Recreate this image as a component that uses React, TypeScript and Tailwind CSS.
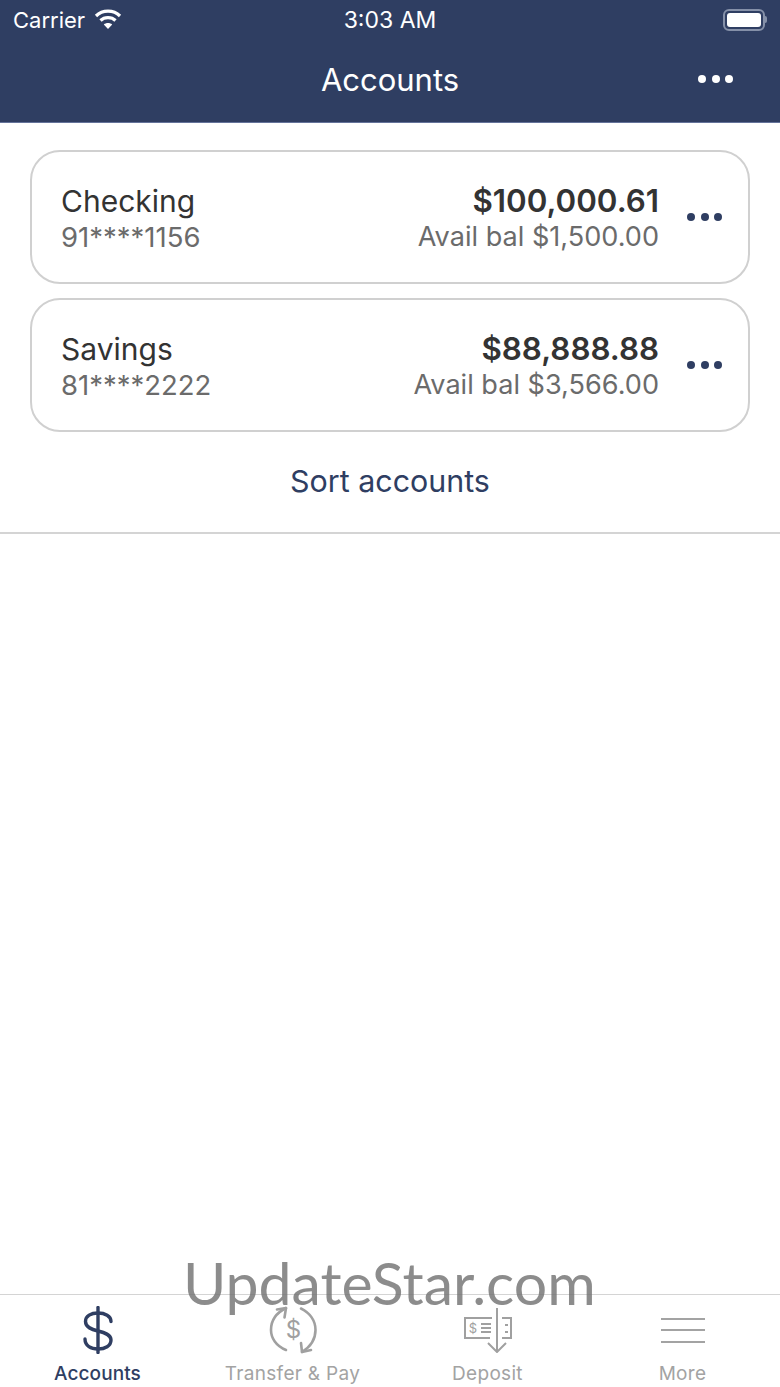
const accounts = [
  { name: 'Checking', mask: '91****1156', balance: '$100,000.61', avail: 'Avail bal $1,500.00' },
  { name: 'Savings', mask: '81****2222', balance: '$88,888.88', avail: 'Avail bal $3,566.00' },
];

function Dots({ color }: { color: string }) {
  return (
    <div className="flex gap-[5.5px]">
      <span className={`w-[8px] h-[8px] ${color} rounded-full`} />
      <span className={`w-[8px] h-[8px] ${color} rounded-full`} />
      <span className={`w-[8px] h-[8px] ${color} rounded-full`} />
    </div>
  );
}

function WifiIcon() {
  return (
    <svg width="28" height="22" viewBox="0 0 28 22" fill="none" stroke="#fff" strokeWidth="3.2" strokeLinecap="butt">
      <path d="M2 8 C8.5 1.5 19.5 1.5 26 8" />
      <path d="M6.5 12.5 C10.5 8.6 17.5 8.6 21.5 12.5" />
      <path d="M14 21 L9.8 16.6 C12 14.6 16 14.6 18.2 16.6 Z" fill="#fff" stroke="none" />
    </svg>
  );
}

function AccountsIcon() {
  return (
    <svg width="30" height="48" viewBox="0 0 30 48" fill="none" stroke="#2f3e62" strokeWidth="3.4" strokeLinecap="round">
      <path d="M15 1.5 V46.5" />
      <path d="M28 15.5 C28 10 22 7 15 7 C8 7 2.5 10 2.5 15.5 C2.5 21.5 9 23.5 15 25 C21.5 26.5 28 28.5 28 34 C28 40 22 43 15 43 C8 43 2 40 2 33" />
    </svg>
  );
}

function TransferIcon() {
  return (
    <svg width="48" height="48" viewBox="0 0 48 48" fill="none" stroke="#a0a0a0" strokeWidth="2.6" strokeLinecap="round" strokeLinejoin="round">
      <path d="M17 44 C7 40 2 32 2 24 C2 15 7 7 17 2" />
      <path d="M8 3.5 L17 2 L15.5 11.5" />
      <path d="M32 2.5 C41 7 46.5 15 46.5 24 C46.5 33 41 41 33 46" />
      <path d="M32 37 L33 46 L42 44" />
      <text x="24.5" y="32" textAnchor="middle" fontSize="24" fontFamily="Inter, sans-serif" fill="#a0a0a0" stroke="none">$</text>
    </svg>
  );
}

function DepositIcon() {
  return (
    <svg width="50" height="46" viewBox="0 0 50 46" fill="none" stroke="#a0a0a0" strokeWidth="2">
      <path d="M29 11 H2 V31 H27" />
      <path d="M39 11 H48 V31 H39" />
      <path d="M34 1 V45" />
      <path d="M25 36 L34 45 L43 36" />
      <path d="M18 17 H28 M18 21 H28 M18 25 H28" />
      <path d="M42 18 H45 M42 25 H45" />
      <text x="10" y="26" textAnchor="middle" fontSize="13" fontFamily="Inter, sans-serif" fill="#a0a0a0" stroke="none">$</text>
    </svg>
  );
}

function MoreIcon() {
  return (
    <div className="flex flex-col gap-[9.5px] w-[44px]">
      <span className="h-[2px] bg-[#a3a3a3]" />
      <span className="h-[2px] bg-[#a3a3a3]" />
      <span className="h-[2px] bg-[#a3a3a3]" />
    </div>
  );
}

const tabs = [
  { label: 'Accounts', icon: <AccountsIcon />, active: true },
  { label: 'Transfer & Pay', icon: <TransferIcon />, active: false },
  { label: 'Deposit', icon: <DepositIcon />, active: false },
  { label: 'More', icon: <MoreIcon />, active: false },
];

export default function App() {
  return (
    <div className="relative w-[780px] h-[1387px] bg-white flex flex-col font-['Inter',sans-serif] overflow-hidden">
      <header className="h-[123px] bg-[#2f3e62] border-b border-[#64739a] text-white shrink-0 flex flex-col">
        <div className="h-[40px] px-[13px] grid grid-cols-3 items-center">
          <div className="flex items-center gap-[9px] text-[22px] leading-none">
            <span>Carrier</span>
            <div className="-mt-[3px]">
              <WifiIcon />
            </div>
          </div>
          <div className="text-center text-[23px] leading-none">3:03 AM</div>
          <div className="flex justify-end items-center -mt-[1px]">
            <div className="w-[42px] h-[22px] rounded-[6px] border-2 border-[#8590a8] p-[2px]">
              <div className="w-full h-full bg-white rounded-[3px]" />
            </div>
            <div className="w-[2px] h-[7px] bg-[#8590a8] rounded-r-sm" />
          </div>
        </div>
        <div className="flex-1 relative flex items-center justify-center pb-[4px]">
          <h1 className="text-[31px] leading-none font-normal">Accounts</h1>
          <div className="absolute right-[47px] top-[35px]">
            <Dots color="bg-white" />
          </div>
        </div>
      </header>

      <main className="flex-1 flex flex-col pt-[27px]">
        <div className="px-[30px] flex flex-col gap-[14px]">
          {accounts.map((a) => (
            <div key={a.name} className="h-[134px] rounded-[30px] border-2 border-[#d0d0d0] pl-[29px] pr-[26px] flex items-center">
              <div className="flex-1 pt-[3px]">
                <div className="text-[30px] leading-[36px] text-[#333333]">{a.name}</div>
                <div className="text-[27.5px] leading-[36px] text-[#6b6b6b]">{a.mask}</div>
              </div>
              <div className="text-right mr-[28px] pt-[3px]">
                <div className="text-[31.3px] leading-[36px] font-semibold text-[#333333]">{a.balance}</div>
                <div className="text-[27.1px] leading-[36px] text-[#6b6b6b]">{a.avail}</div>
              </div>
              <div className="-mt-[1px]">
                <Dots color="bg-[#2f3e62]" />
              </div>
            </div>
          ))}
        </div>
        <div className="h-[102px] border-b-2 border-[#d4d4d4] flex items-center justify-center">
          <span className="text-[30.4px] text-[#2f3e62]">Sort accounts</span>
        </div>
      </main>

      <nav className="h-[93px] shrink-0 border-t border-[#d4d4d4] grid grid-cols-4">
        {tabs.map((t) => (
          <div key={t.label} className="flex flex-col items-center">
            <div className="h-[60px] flex items-center justify-center pt-[10px]">{t.icon}</div>
            <span className={`mt-[7px] text-[19px] leading-[24px] ${t.active ? 'text-[#2f3e62] font-medium tracking-[0.1px]' : 'text-[#a3a3a3] tracking-[0.3px]'}`}>
              {t.label}
            </span>
          </div>
        ))}
      </nav>

      <div className="absolute left-[183px] top-[1245px] text-[59px] leading-[76px] text-[#6f6f6f]/80 font-['Lato',sans-serif]">
        UpdateStar.com
      </div>
    </div>
  );
}
